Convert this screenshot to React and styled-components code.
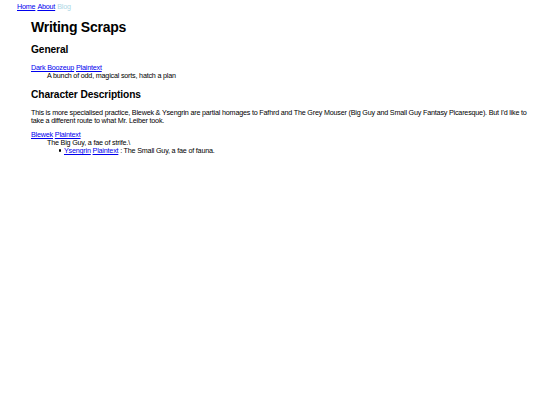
import React from "react";
import styled, { createGlobalStyle } from "styled-components";

const Global = createGlobalStyle`
  html, body { margin: 0; padding: 0; background: #fff; }
  body {
    font-family: "Liberation Sans", Arial, sans-serif;
    font-size: 7.2px;
    line-height: 8px;
    letter-spacing: -0.2px;
    color: #000;
  }
`;

const Page = styled.div`
  padding: 3px 8px 0 17px;
`;

const Nav = styled.nav`
  display: flex;
  gap: 2px;
`;

const Link = styled.a`
  color: ${(p) => (p.$current ? "#add8e6" : "#0000ee")};
  text-decoration: ${(p) => (p.$current ? "none" : "underline")};
`;

const Main = styled.main`
  padding-left: 14px;
`;

const Title = styled.h1`
  font-size: 14px;
  line-height: 16px;
  letter-spacing: -0.25px;
  margin: 8px 0 9px;
`;

const Heading = styled.h2`
  font-size: 10.2px;
  line-height: 12px;
  letter-spacing: -0.1px;
  margin: 9px 0 8px;
`;

const Entry = styled.dl`
  margin: 6px 0 0;
`;

const Term = styled.dt``;

const Desc = styled.dd`
  margin: 0 0 0 16px;
`;

const Para = styled.p`
  margin: 7px 0 6px;
`;

const List = styled.ul`
  margin: 0;
  padding-left: 17px;
  list-style: none;
`;

const Item = styled.li`
  &::before {
    content: "";
    display: inline-block;
    width: 2.6px;
    height: 2.6px;
    border-radius: 50%;
    background: #000;
    margin-left: -5.5px;
    margin-right: 2.9px;
    vertical-align: 1.3px;
  }
`;

export default function App() {
  return (
    <>
      <Global />
      <Page>
        <Nav>
          <Link href="#">Home</Link>
          <Link href="#">About</Link>
          <Link href="#" $current>Blog</Link>
        </Nav>
        <Main>
          <Title>Writing Scraps</Title>
          <Heading>General</Heading>
          <Entry>
            <Term>
              <Link href="#">Dark Boozeup</Link> <Link href="#">Plaintext</Link>
            </Term>
            <Desc>A bunch of odd, magical sorts, hatch a plan</Desc>
          </Entry>
          <Heading>Character Descriptions</Heading>
          <Para>
            This is more specialised practice, Blewek &amp; Ysengrin are partial homages to Fafhrd and The Grey Mouser (Big Guy and Small Guy Fantasy Picaresque). But I'd like to take a different route to what Mr. Leiber took.
          </Para>
          <Entry>
            <Term>
              <Link href="#">Blewek</Link> <Link href="#">Plaintext</Link>
            </Term>
            <Desc>
              The Big Guy, a fae of strife.\
              <List>
                <Item>
                  <Link href="#">Ysengrin</Link> <Link href="#">Plaintext</Link> : The Small Guy, a fae of fauna.
                </Item>
              </List>
            </Desc>
          </Entry>
        </Main>
      </Page>
    </>
  );
}
